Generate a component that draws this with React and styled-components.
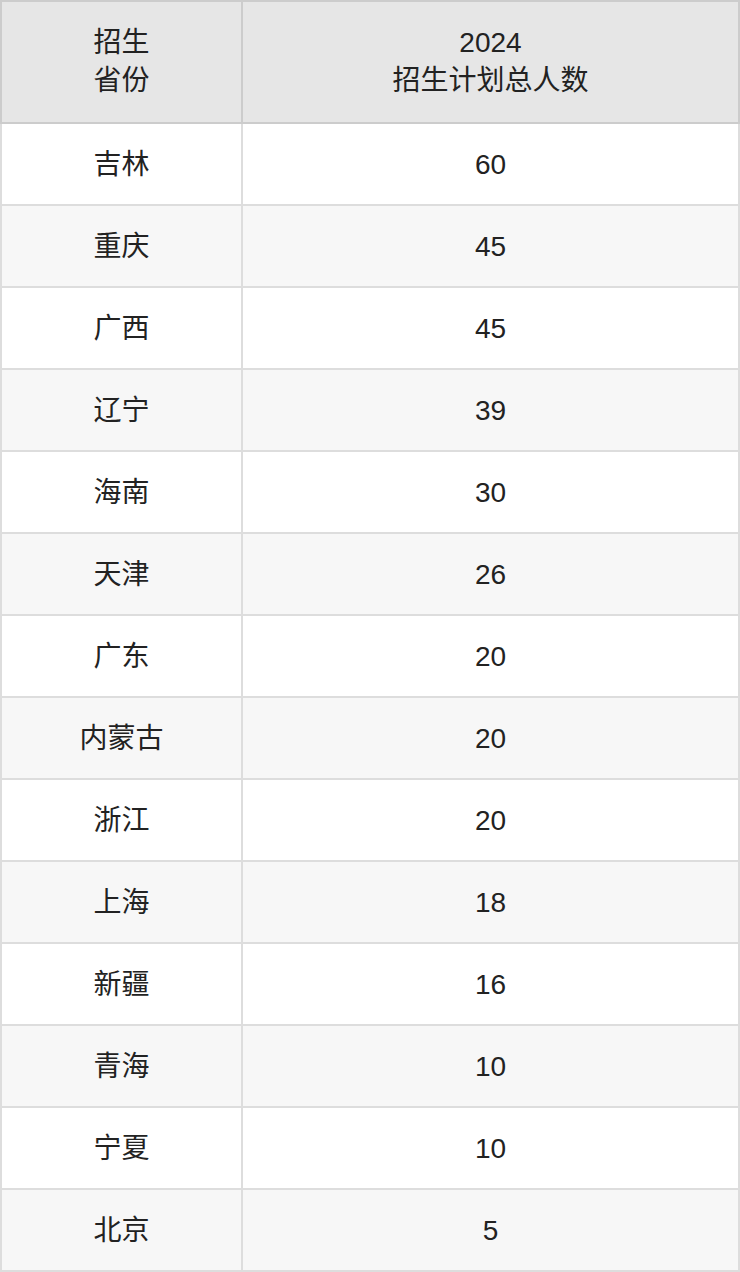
import React from "react";
import styled, { createGlobalStyle } from "styled-components";

const GlobalStyle = createGlobalStyle`
  html, body { margin: 0; padding: 0; background: #ffffff; }
  * { box-sizing: border-box; }
`;

const Table = styled.div`
  display: grid;
  grid-template-columns: 243px 497px;
  width: 740px;
  font-family: "Liberation Sans", Arial, "Noto Sans CJK SC", sans-serif;
  font-size: 28px;
  color: #222222;
`;

const Cell = styled.div`
  display: flex;
  align-items: center;
  justify-content: center;
  text-align: center;
  line-height: 38px;
  padding-top: ${(p) => (p.$head ? "0" : "2px")};
  border-right: 2px solid ${(p) => (p.$head ? "#cccccc" : "#dddddd")};
  border-bottom: 2px solid ${(p) => (p.$head ? "#cccccc" : "#dddddd")};
  border-left: ${(p) => (p.$first ? `2px solid ${p.$head ? "#cccccc" : "#dddddd"}` : "none")};
  border-top: ${(p) => (p.$head ? "2px solid #cccccc" : "none")};
  background: ${(p) => (p.$head ? "#e6e6e6" : p.$alt ? "#f7f7f7" : "#ffffff")};
  height: ${(p) => (p.$head ? "124px" : "82px")};
`;

const rows = [
  ["吉林", "60"],
  ["重庆", "45"],
  ["广西", "45"],
  ["辽宁", "39"],
  ["海南", "30"],
  ["天津", "26"],
  ["广东", "20"],
  ["内蒙古", "20"],
  ["浙江", "20"],
  ["上海", "18"],
  ["新疆", "16"],
  ["青海", "10"],
  ["宁夏", "10"],
  ["北京", "5"],
];

export default function App() {
  return (
    <>
      <GlobalStyle />
      <Table>
        <Cell $head $first>
          招生
          <br />
          省份
        </Cell>
        <Cell $head>
          2024
          <br />
          招生计划总人数
        </Cell>
        {rows.map(([name, num], i) => (
          <React.Fragment key={name}>
            <Cell $first $alt={i % 2 === 1}>{name}</Cell>
            <Cell $alt={i % 2 === 1}>{num}</Cell>
          </React.Fragment>
        ))}
      </Table>
    </>
  );
}
